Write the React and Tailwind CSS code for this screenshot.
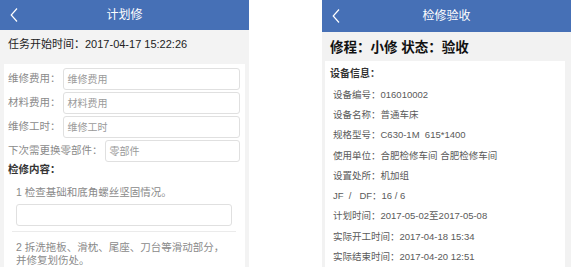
import React from "react";

const FONT = { fontFamily: '"Liberation Sans", "Noto Sans CJK SC", sans-serif' };

const costRows = [
  { label: "维修费用", placeholder: "维修费用" },
  { label: "材料费用", placeholder: "材料费用" },
  { label: "维修工时", placeholder: "维修工时" },
  { label: "下次需更换零部件", placeholder: "零部件" },
];

const deviceInfo = [
  "设备编号：016010002",
  "设备名称：普通车床",
  "规格型号：C630-1M  615*1400",
  "使用单位：合肥检修车间 合肥检修车间",
  "设置处所：机加组",
  "JF  /   DF：16 / 6",
  "计划时间：2017-05-02至2017-05-08",
  "实际开工时间：2017-04-18 15:34",
  "实际结束时间：2017-04-20 12:51",
];

function Back() {
  return (
    <svg width="8" height="15" viewBox="0 0 8 15" className="absolute left-[10px] top-1/2 -translate-y-1/2">
      <path d="M7 1 L1.2 7.5 L7 14" fill="none" stroke="white" strokeWidth="1.2" />
    </svg>
  );
}

function Header({ title, tall }) {
  return (
    <div className={`relative flex items-center justify-center bg-[#4670b6] text-white text-[12px] ${tall ? "h-[35px]" : "h-[32px]"}`}>
      <Back />
      <span>{title}</span>
    </div>
  );
}

export default function App() {
  return (
    <div className="flex w-[571px] h-[267px] overflow-hidden bg-white" style={FONT}>
      {/* left screen */}
      <div className="w-[249px] h-full bg-[#f3f3f3] flex flex-col">
        <Header title="计划修" />
        <div className="h-[30px] flex items-center px-[8px] text-[11px] text-[#222]">
          任务开始时间：2017-04-17 15:22:26
        </div>
        <div className="mt-[5px] mx-[4px] bg-white pt-[4px] pl-[4px] pr-[5px] flex-1">
          <div className="flex flex-col gap-[2px]">
            {costRows.map((r) => (
              <div key={r.label} className="flex items-center h-[22px]">
                <span className="text-[10.5px] text-[#8a8a8a] whitespace-nowrap">{r.label}：</span>
                <div className="ml-[2px] flex-1 h-[22px] border border-[#e0e0e0] rounded-[3px] flex items-center px-[4px] text-[10px] text-[#9a9a9a]">
                  {r.placeholder}
                </div>
              </div>
            ))}
          </div>
          <div className="h-[16px] flex items-center text-[10.5px] font-bold text-[#333]">检修内容：</div>
          <div className="mx-[4px] mt-[6px] border-b border-[#ebebeb] pb-[5px] px-[4px]">
            <div className="text-[10.5px] text-[#8a8a8a] leading-[16px]">1 检查基础和底角螺丝坚固情况。</div>
            <div className="mt-[4px] h-[22px] border border-[#e0e0e0] rounded-[3px]" />
          </div>
          <div className="mx-[4px] mt-[9px] px-[4px] text-[10.5px] text-[#8a8a8a] leading-[13px] whitespace-nowrap">
            2 拆洗拖板、滑枕、尾座、刀台等滑动部分，
            <br />
            并修复划伤处。
          </div>
        </div>
      </div>

      <div className="w-[73px]" />

      {/* right screen */}
      <div className="flex-1 h-full bg-[#f2f2f2] flex flex-col">
        <Header title="检修验收" tall />
        <div className="h-[32px] flex items-center pt-[3px] px-[8px] text-[13.5px] font-bold text-[#111] whitespace-pre">
          修程：小修 状态：验收
        </div>
        <div className="ml-[3px] mr-[6px] bg-white flex-1 pt-[6px] px-[5px]">
          <div className="text-[10px] font-bold text-[#333] leading-[13px]">设备信息：</div>
          <div className="mt-[5px] pl-[3px] flex flex-col">
            {deviceInfo.map((t) => (
              <div key={t} className="h-[20.25px] flex items-center text-[9.5px] text-[#5a5a5a] whitespace-pre">
                {t}
              </div>
            ))}
          </div>
        </div>
      </div>
    </div>
  );
}
